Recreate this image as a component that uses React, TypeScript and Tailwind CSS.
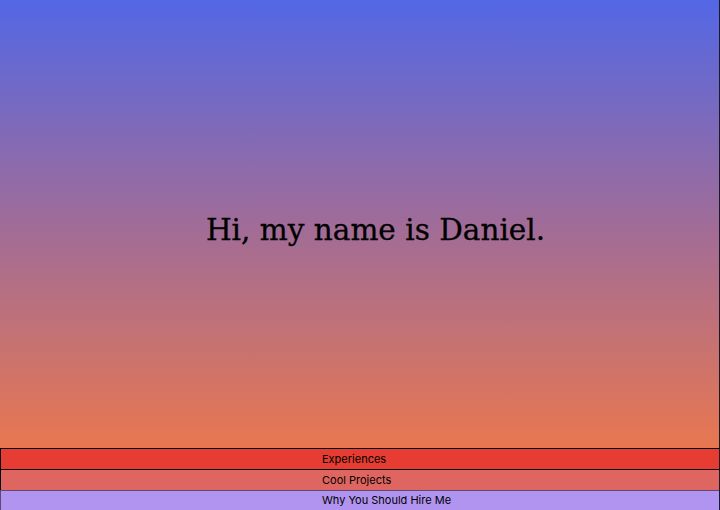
import React from "react";

export default function App() {
  return (
    <div className="w-[720px] h-[510px] flex flex-col overflow-hidden border-r border-[#1a1a2a]">
      <div className="flex-1 flex items-center justify-center pl-[32px] pt-[14px] bg-[linear-gradient(to_bottom,#5367e5_0%,#a06c98_50%,#e87750_100%)]">
        <h1 className="text-[29.5px] leading-none text-black font-['DejaVu_Serif',serif] [-webkit-text-stroke:0.3px_black]">
          Hi, my name is Daniel.
        </h1>
      </div>
      <div className="flex flex-col font-['Inter',sans-serif] text-[11px] text-black">
        <div className="h-[21px] border-t border-l border-black bg-[#e63c31] pl-[321px] flex items-center">
          Experiences
        </div>
        <div className="h-[21px] border-t border-l border-black bg-[#df6561] pl-[321px] flex items-center">
          Cool Projects
        </div>
        <div className="h-[20px] border-t border-l border-[#5a4a78] bg-[#b194f0] pl-[321px] flex items-center">
          Why You Should Hire Me
        </div>
      </div>
    </div>
  );
}
